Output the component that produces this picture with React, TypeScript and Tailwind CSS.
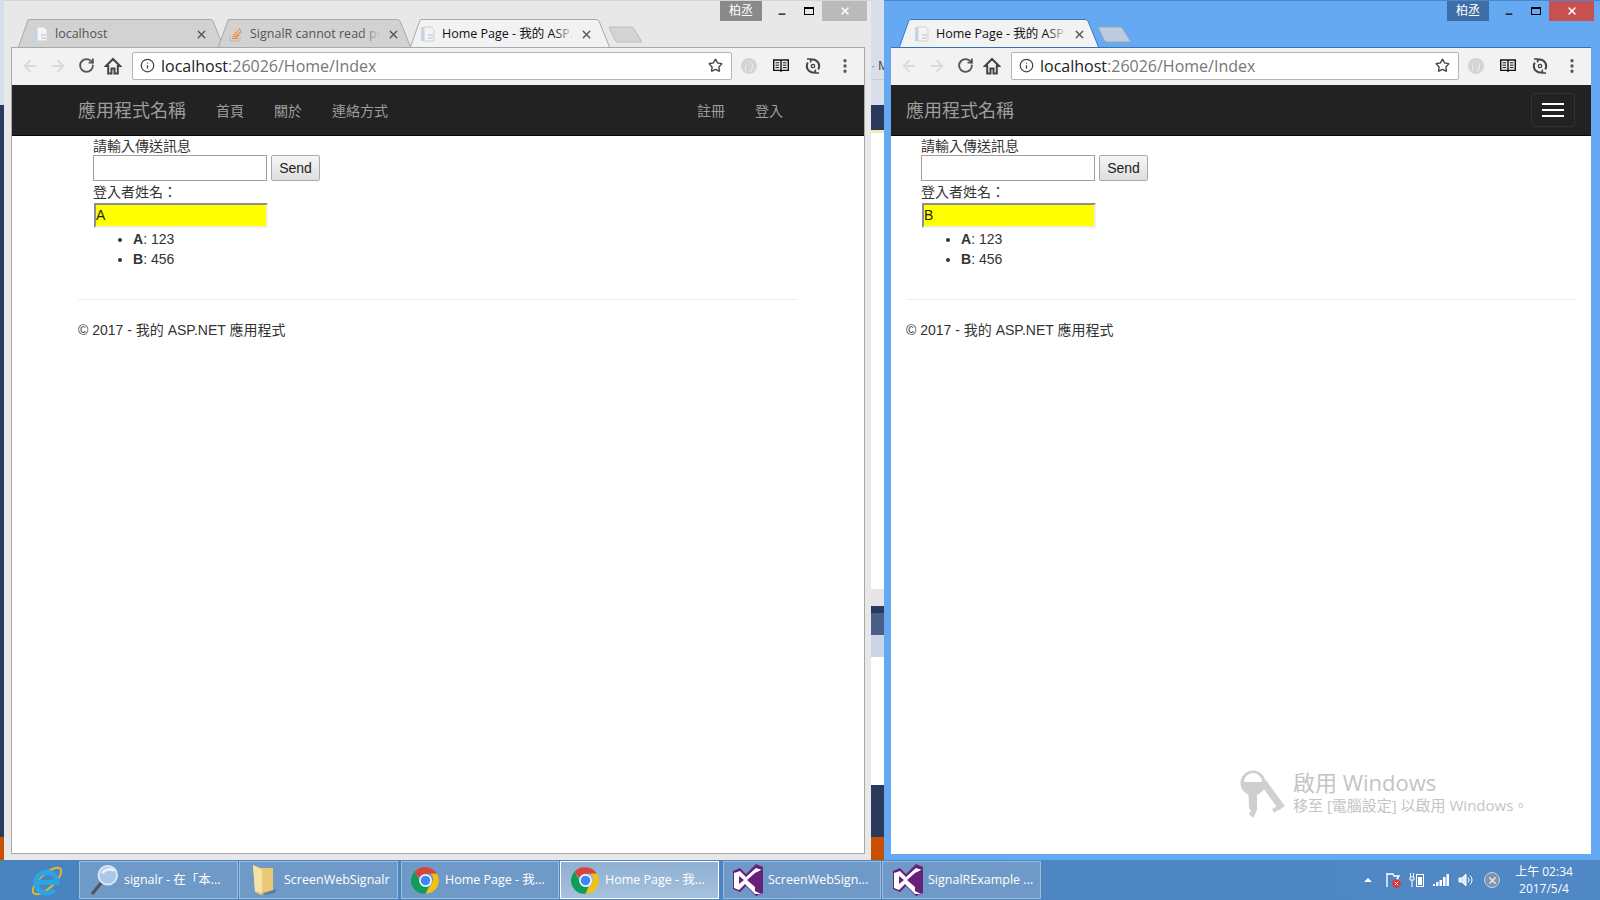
import { ArrowLeft, ArrowRight, RotateCw, Star, Info, X, Minus, EllipsisVertical } from 'lucide-react'

const cjk = "font-['Liberation_Sans','Noto_Sans_CJK_TC',sans-serif]"
const ui = "font-['Open_Sans','Noto_Sans_CJK_TC',sans-serif]"

function PageIcon() {
  return (
    <svg width="16" height="16" viewBox="0 0 16 16" className="shrink-0">
      <rect x="1" y="1" width="5" height="14" fill="#bcd6ee" />
      <path d="M4 1h7l3 3v11H4z" fill="#f4f4f4" stroke="#d0d0d0" />
      <path d="M8 9h5M8 12h5" stroke="#bdbdbd" />
    </svg>
  )
}

function SoIcon() {
  return (
    <svg width="14" height="16" viewBox="0 0 14 16" className="shrink-0">
      <path d="M1 10v5h10v-5" fill="none" stroke="#b8b8b8" />
      <path d="M3 12.5h6M3.2 10.5l6 .6M4 8.4l5.8 1.5M5.4 6l5.2 3M7.4 3.8l4.2 4.2M10 2l2.6 5" stroke="#f48024" fill="none" />
    </svg>
  )
}

// tab shape, slanted on both sides
function Tab({ w, active, blue, icon, label, fade, ml, pad }: { w: number; active?: boolean; blue?: boolean; icon: React.ReactNode; label: string; fade?: boolean; ml?: string; pad: string }) {
  const fill = active ? '#f2f2f2' : '#d2d2d2'
  const stroke = blue ? '#3a79c0' : '#a8a8a8'
  return (
    <div className={`relative h-[28px] shrink-0 ${ml ?? ''}`} style={{ width: w }}>
      <svg className="absolute inset-0" width={w} height="28">
        <path d={`M0.5 28 L10 1 Q10.5 0.5 12 0.5 H${w - 14} Q${w - 12} 0.5 ${w - 11} 2 L${w - 0.5} 28`} fill={fill} stroke={stroke} />
      </svg>
      <div className={`relative flex h-full items-center pt-[2px] text-[12.5px] text-[#333] ${ui} ${pad}`}>
        <div className="flex w-[16px] shrink-0 justify-center">{icon}</div>
        <div className="relative ml-[6px] min-w-0 flex-1 overflow-hidden whitespace-nowrap">
          <span className={active ? 'text-[#111]' : 'text-[#555]'}>{label}</span>
          {fade && <div className={`absolute inset-y-0 right-0 w-[20px] bg-gradient-to-r from-transparent ${active ? 'to-[#f2f2f2]' : 'to-[#d2d2d2]'}`} />}
        </div>
        <X className="ml-[6px] shrink-0 text-[#555]" size={13} strokeWidth={2.6} />
      </div>
    </div>
  )
}

function NewTab({ blue }: { blue?: boolean }) {
  return (
    <svg width="36" height="18" className="ml-[-2px] mt-[7px] shrink-0">
      <path d="M1 1 H23 Q25 1 26 3 L34 16 H10 Q8 16 7 14 Z" fill={blue ? '#bccbdd' : '#d4d4d4'} stroke={blue ? '#8fa6bf' : '#bcbcbc'} />
    </svg>
  )
}

function HomeIcon() {
  return (
    <svg width="18" height="18" viewBox="0 0 18 18" fill="none" stroke="#444" strokeWidth="2" className="ml-[9px]">
      <path d="M9 2L2 9h2.2v7.5h3.3v-5h3v5h3.3V9H16z" />
    </svg>
  )
}

function BookIcon() {
  return (
    <svg width="16" height="13" viewBox="0 0 16 13" fill="none" stroke="#111" strokeWidth="1.4">
      <path d="M.7 1h6.6l.7.7.7-.7h6.6v10.4H8.7l-.7.7-.7-.7H.7zM8 1.5v10" />
      <path d="M2.5 3.8h3.6M2.5 6.2h3.6M2.5 8.6h3.6M9.9 3.8h3.6M9.9 6.2h3.6M9.9 8.6h3.6" strokeWidth="1" />
    </svg>
  )
}

function SyncIcon() {
  return (
    <svg width="16" height="16" viewBox="0 0 16 16" fill="none" stroke="#444" strokeWidth="2">
      <path d="M5 2.2A6.4 6.4 0 0 1 14.2 8a6.4 6.4 0 0 1-1 3.4" />
      <path d="M11 13.8A6.4 6.4 0 0 1 1.8 8a6.4 6.4 0 0 1 1-3.4" />
      <path d="M2 1h3.6v3.4M14 15h-3.6v-3.4" strokeWidth="1.5" />
      <circle cx="8" cy="8" r="1.7" strokeWidth="1.3" />
    </svg>
  )
}

function ExtIcon() {
  return (
    <svg width="18" height="18" viewBox="0 0 18 18">
      <circle cx="9" cy="9" r="8" fill="#d4d4d4" />
      <path d="M12 2.5C7 3.5 4.5 8 6.5 15 4 11 5 5 12 2.5z" fill="#fff" />
      <path d="M10.5 4.5c2.5 3 2 7.5-1 10.5 3.5-1 5-7.500 1-10.500z" fill="#f6f6f6" />
    </svg>
  )
}

function Toolbar({ blue }: { blue?: boolean }) {
  return (
    <div className={`flex h-[38px] shrink-0 items-center border-t bg-[#f2f2f2] pb-[2px] ${blue ? 'border-[#3a70ae]' : 'border-[#a8a8a8]'}`}>
      <div className="flex items-center pl-[9px]">
        <ArrowLeft size={18} className="text-[#dadada]" strokeWidth={2.4} />
        <ArrowRight size={18} className="ml-[10px] text-[#dadada]" strokeWidth={2.4} />
        <RotateCw size={17} className="ml-[11px] text-[#555]" strokeWidth={2.6} />
        <HomeIcon />
      </div>
      <div className="ml-[10px] flex h-[28px] min-w-0 flex-1 items-center rounded-[2px] border border-[#b4b4b4] bg-white pl-[7px] pr-[5px]">
        <Info size={15} className="text-[#444]" strokeWidth={2} />
        <span className={`ml-[6px] text-[16px] ${ui}`}>
          <span className="text-[#222]">localhost</span>
          <span className="text-[#777]">:26026/Home/Index</span>
        </span>
        <Star size={15} className="ml-auto mr-[3px] text-[#444]" strokeWidth={2.2} />
      </div>
      <div className="flex w-[132px] shrink-0 items-center justify-between pl-[8px] pr-[10px]">
        <ExtIcon />
        <BookIcon />
        <SyncIcon />
        <EllipsisVertical size={18} className="text-[#555]" strokeWidth={2.4} />
      </div>
    </div>
  )
}

function Controls({ blue }: { blue?: boolean }) {
  return (
    <div className="flex h-[20px] items-stretch">
      <div className={`flex w-[42px] items-center justify-center text-[12px] ${cjk} ${blue ? 'bg-[#3d6ea5]' : 'bg-[#8a8a8a]'} text-white`}>柏丞</div>
      <div className="flex w-[40px] items-center justify-center pt-[5px]">
        <Minus size={10} className="text-black" strokeWidth={3} />
      </div>
      <div className="mr-[6px] flex w-[14px] items-center justify-center">
        <div className="h-[8px] w-[10px] border border-t-2 border-black" />
      </div>
      <div className={`flex w-[45px] items-center justify-center ${blue ? 'bg-[#c75050]' : 'bg-[#bababa]'}`}>
        <X size={12} className="text-white" strokeWidth={3} />
      </div>
    </div>
  )
}

function Page({ user }: { user: string }) {
  return (
    <div className={`text-[14px] leading-[20px] text-[#333] ${cjk}`}>
      <div className="pl-[15px]">
        <div className="h-[19px]">請輸入傳送訊息</div>
        <div className="flex h-[26px] gap-[4px]">
          <div className="w-[174px] border border-[#a0a0a0] bg-white" />
          <div className="flex w-[49px] items-center justify-center rounded-[2px] border border-[#a9a9a9] bg-gradient-to-b from-[#f6f6f6] to-[#dedede] text-[#222]">Send</div>
        </div>
        <div className="mt-[1px] h-[21px]">登入者姓名：</div>
        <div className="ml-[1px] h-[25px] w-[174px] border-2 border-b-[#efefef] border-l-[#8f8f8f] border-r-[#efefef] border-t-[#8f8f8f] bg-[#ffff00] leading-[21px] text-[#222]">{user}</div>
        <ul className="mt-[1px] list-disc pl-[40px]">
          <li><b>A</b>: 123</li>
          <li><b>B</b>: 456</li>
        </ul>
      </div>
      <hr className="mt-[30px] border-[#eeeeee]" />
      <div className="mt-[20px]">© 2017 - 我的 ASP.NET 應用程式</div>
    </div>
  )
}

function LeftWindow() {
  return (
    <div className="flex h-full w-[867px] shrink-0 flex-col border-t border-[#d5d5d5] bg-[#e8e8e8] pb-[6px] pl-[7px] pr-[6px]">
      <div className="flex h-[46px] shrink-0 flex-col">
        <div className="flex h-0 justify-end">
          <div className="mr-[-2px] h-[20px]"><Controls /></div>
        </div>
        <div className="mt-auto flex pl-[7px]">
          <Tab w={206} pad="pl-[15px] pr-[16px]" icon={<PageIcon />} label="localhost" />
          <Tab w={193} ml="ml-[-6px]" pad="pl-[10px] pr-[11px]" icon={<SoIcon />} label="SignalR cannot read property" fade />
          <Tab w={200} ml="ml-[-1px]" pad="pl-[10px] pr-[17px]" active icon={<PageIcon />} label="Home Page - 我的 ASP.NET 應用程式" fade />
          <NewTab />
        </div>
      </div>
      <div className="flex min-h-0 flex-1 flex-col border-x border-b border-[#a8a8a8] bg-white">
        <Toolbar />
        <nav className={`flex h-[51px] shrink-0 items-center border-b border-[#080808] bg-[#222222] pl-[66px] pr-[81px] pt-[3px] text-[14px] text-[#9d9d9d] ${cjk}`}>
          <span className="text-[18px]">應用程式名稱</span>
          <span className="ml-[30px]">首頁</span>
          <span className="ml-[30px]">關於</span>
          <span className="ml-[30px]">連絡方式</span>
          <span className="ml-auto">註冊</span>
          <span className="ml-[30px]">登入</span>
        </nav>
        <div className="pl-[66px] pr-[66px]">
          <Page user="A" />
        </div>
      </div>
    </div>
  )
}

function KeyMark() {
  return (
    <svg width="46" height="48" viewBox="0 0 46 48">
      <path d="M23 12L42 38" stroke="#d0d0d0" strokeWidth="7" />
      <path d="M38 38l-5 3M42 34l-4 5" stroke="#d0d0d0" strokeWidth="4" />
      <circle cx="13" cy="13" r="12.5" fill="#cfcfcf" />
      <path d="M4 12a9 9 0 0 1 18 0z" fill="#fff" />
      <path d="M8.5 24h8.5v16l-4 8-4-4 2-3-2-3z" fill="#cfcfcf" />
    </svg>
  )
}

function RightWindow() {
  return (
    <div className="relative flex h-full min-w-0 flex-1 flex-col border-t border-[#4a86c8] bg-[#66a9f3] pb-[6px] pl-[7px] pr-[9px]">
      <div className="flex h-[46px] shrink-0 flex-col">
        <div className="flex h-0 justify-end">
          <div className="mr-[-3px] h-[20px]"><Controls blue /></div>
        </div>
        <div className="mt-auto flex pl-[8px]">
          <Tab w={200} active blue pad="pl-[15px] pr-[13px]" icon={<PageIcon />} label="Home Page - 我的 ASP.NET 應用程式" fade />
          <NewTab blue />
        </div>
      </div>
      <div className="relative flex min-h-0 flex-1 flex-col bg-white">
        <Toolbar blue />
        <nav className={`flex h-[51px] shrink-0 items-center justify-between border-b border-[#080808] bg-[#222222] pl-[15px] pr-[16px] text-[#9d9d9d] ${cjk}`}>
          <span className="mt-[3px] text-[18px]">應用程式名稱</span>
          <div className="flex h-[34px] w-[44px] flex-col items-center justify-center gap-[4px] rounded-[4px] border border-[#333333]">
            <div className="h-[2px] w-[22px] bg-white" />
            <div className="h-[2px] w-[22px] bg-white" />
            <div className="h-[2px] w-[22px] bg-white" />
          </div>
        </nav>
        <div className="pl-[15px] pr-[15px]">
          <Page user="B" />
        </div>
        <div className={`absolute bottom-[36px] right-[61px] flex w-[290px] items-start text-[#c4c4c4] ${ui}`}>
          <KeyMark />
          <div className="ml-[7px] mt-[-3px]">
            <div className="text-[22px] leading-[30px]">啟用 Windows</div>
            <div className="mt-[-2px] text-[15px] leading-[20px]">移至 [電腦設定] 以啟用 Windows。</div>
          </div>
        </div>
      </div>
    </div>
  )
}

function ChromeLogo() {
  return (
    <svg width="29" height="29" viewBox="0 0 48 48" className="shrink-0">
      <path d="M24 2a22 22 0 0 1 19 11H24a11 11 0 0 0-10.4 7.3L6 9A22 22 0 0 1 24 2z" fill="#db4437" />
      <path d="M43 13a22 22 0 0 1-19 33l10-17a11 11 0 0 0-1-16z" fill="#f4c20d" />
      <path d="M24 46A22 22 0 0 1 6 9l9.5 17A11 11 0 0 0 29 34z" fill="#0f9d58" />
      <circle cx="24" cy="24" r="10.5" fill="#fff" />
      <circle cx="24" cy="24" r="8" fill="#4285f4" />
    </svg>
  )
}

function VsLogo() {
  return (
    <svg width="30" height="32" viewBox="0 0 30 32" className="shrink-0">
      <path d="M0 7l7-3 6 6 10-10 7 3v26l-7 3-10-10-6 6-7-3z" fill="#68217a" />
      <path d="M1 9l6-2 6 6 10-9 6 2-1 0-6 3v18l6 3-6 0-10-10-6 6-5-2v-2z" fill="#fff" />
      <path d="M6 12l5 4-5 4zM22 9v14l-8-7z" fill="#68217a" />
    </svg>
  )
}

function IeLogo() {
  return (
    <svg width="32" height="33" viewBox="0 0 32 33">
      <ellipse cx="16" cy="17" rx="18" ry="7" transform="rotate(-42 16 17)" fill="none" stroke="#e8b62c" strokeWidth="2" />
      <path d="M6 18.5h20a10.5 10.5 0 1 0-3 7.5" fill="none" stroke="#2aa7e0" strokeWidth="5" />
    </svg>
  )
}

function SearchLogo() {
  return (
    <svg width="28" height="34" viewBox="0 0 30 34" className="shrink-0">
      <path d="M11 20L2 31" stroke="#555" strokeWidth="3.5" strokeLinecap="round" />
      <circle cx="18" cy="12" r="10" fill="#a9c8ea" stroke="#dce8f4" strokeWidth="2" />
      <path d="M12 10c2-4 8-6 13-3" stroke="#e8f1fa" strokeWidth="3" fill="none" />
    </svg>
  )
}

function FolderLogo() {
  return (
    <svg width="28" height="32" viewBox="0 0 28 32" className="shrink-0">
      <path d="M2 1l8 3h12v22l-12 5-6-3z" fill="#e9c978" />
      <path d="M2 1l9 5v23l-7-2z" fill="#f6e2a4" />
      <path d="M11 29l12-3 3-1-2 4-10 2z" fill="#4a6078" opacity=".5" />
    </svg>
  )
}

function TaskItem({ w, ml, pad, active, icon, label }: { w: number; ml?: string; pad: string; active?: boolean; icon: React.ReactNode; label: string }) {
  return (
    <div
      className={`flex h-[38px] shrink-0 items-center border text-[12.5px] text-white ${ui} ${pad} ${ml ?? ''} ${active ? 'border-white bg-gradient-to-b from-[#8fb0d2] to-[#a6c1dc]' : 'border-[#9dbcdc] bg-[#6f9ac7]'}`}
      style={{ width: w }}
    >
      {icon}
      <span className="ml-[5px] overflow-hidden whitespace-nowrap">{label}</span>
    </div>
  )
}

function Taskbar() {
  return (
    <div className="flex h-[40px] shrink-0 items-center bg-gradient-to-r from-[#4a84c0] to-[#4f88c4]">
      <div className="flex w-[79px] shrink-0 justify-center pl-[14px]">
        <IeLogo />
      </div>
      <TaskItem w={159} pad="pl-[11px]" icon={<SearchLogo />} label="signalr - 在「本..." />
      <TaskItem w={159} ml="ml-[1px]" pad="pl-[11px]" icon={<FolderLogo />} label="ScreenWebSignalr" />
      <TaskItem w={158} ml="ml-[3px]" pad="pl-[9px]" icon={<ChromeLogo />} label="Home Page - 我..." />
      <TaskItem w={159} ml="ml-[1px]" pad="pl-[10px]" active icon={<ChromeLogo />} label="Home Page - 我..." />
      <TaskItem w={158} ml="ml-[4px]" pad="pl-[9px]" icon={<VsLogo />} label="ScreenWebSign..." />
      <TaskItem w={159} ml="ml-[1px]" pad="pl-[10px]" icon={<VsLogo />} label="SignalRExample ..." />
      <div className="ml-auto flex items-center text-white">
        <div className="h-0 w-0 border-x-[4px] border-b-[4px] border-x-transparent border-b-white" />
        <svg width="16" height="16" viewBox="0 0 16 16" className="ml-[13px]">
          <path d="M2 1v14M2 2h6l1 2h5l-2 3 2 2H9" fill="none" stroke="#fff" strokeWidth="1.4" />
          <circle cx="11.5" cy="11.5" r="4.2" fill="#e03030" />
          <path d="M9.7 9.7l3.6 3.6M13.3 9.7l-3.6 3.6" stroke="#fff" />
        </svg>
        <svg width="16" height="16" viewBox="0 0 16 16" className="ml-[8px]">
          <path d="M1.5 1v4M4.5 1v4M1 5h4v3H1zM3 8v7" stroke="#fff" fill="none" />
          <rect x="7.5" y="2.5" width="7" height="12" fill="none" stroke="#fff" />
          <rect x="9" y="5" width="4" height="8" fill="#fff" />
        </svg>
        <svg width="16" height="14" viewBox="0 0 16 14" className="ml-[8px]" fill="#fff">
          <rect x="0" y="11" width="2" height="2" />
          <rect x="3" y="9" width="2.5" height="4" />
          <rect x="6.5" y="7" width="2.5" height="6" />
          <rect x="10" y="4" width="2.5" height="9" />
          <rect x="13.5" y="1" width="2.5" height="12" />
        </svg>
        <svg width="16" height="16" viewBox="0 0 16 16" className="ml-[9px]" fill="none" stroke="#fff">
          <path d="M1 6h3l4-4v12l-4-4H1z" fill="#dfe9f4" />
          <path d="M10 5.5a3.5 3.5 0 0 1 0 5M12 3.5a6 6 0 0 1 0 9" />
        </svg>
        <div className="ml-[10px] flex h-[16px] w-[16px] items-center justify-center rounded-full border border-[#c9d4df] bg-[#7f93a8]">
          <X size={11} className="text-[#dfe6ee]" strokeWidth={3.4} />
        </div>
        <div className={`ml-[9px] mr-[21px] w-[70px] text-center text-[12px] leading-[17px] ${ui}`}>
          <div>上午 02:34</div>
          <div>2017/5/4</div>
        </div>
      </div>
    </div>
  )
}

export default function App() {
  return (
    <div className="flex h-[900px] w-[1600px] flex-col overflow-hidden">
      <div className="flex min-h-0 flex-1">
        <div className="flex w-[4px] shrink-0 flex-col bg-[#2a3a5c]">
          <div className="h-[105px] bg-[#d8dfea]" />
          <div className="flex-1" />
          <div className="h-[23px] bg-[#c85000]" />
        </div>
        <LeftWindow />
        <div className="flex w-[13px] shrink-0 flex-col overflow-hidden bg-white">
          <div className={`h-[80px] whitespace-nowrap border-b border-[#c4cede] bg-[#d8dfea] pt-[58px] text-[12px] leading-[16px] text-[#444] ${cjk}`}><span className="text-[#3a7ab8]">·</span> M</div>
          <div className="h-[25px] bg-[#d8dfea]" />
          <div className="h-[25px] bg-[#2a3a5c]" />
          <div className="h-[3px] bg-[#f8e8b0]" />
          <div className="h-[456px] bg-white" />
          <div className="h-[17px] bg-[#e4e4ea]" />
          <div className="h-[7px] bg-[#2a3a5c]" />
          <div className="h-[22px] bg-[#4a5f88]" />
          <div className="h-[22px] bg-[#ccd5e6]" />
          <div className="h-[128px] bg-white" />
          <div className="h-[52px] bg-[#2a3a5c]" />
          <div className="flex-1 bg-[#c85000]" />
        </div>
        <RightWindow />
      </div>
      <Taskbar />
    </div>
  )
}
